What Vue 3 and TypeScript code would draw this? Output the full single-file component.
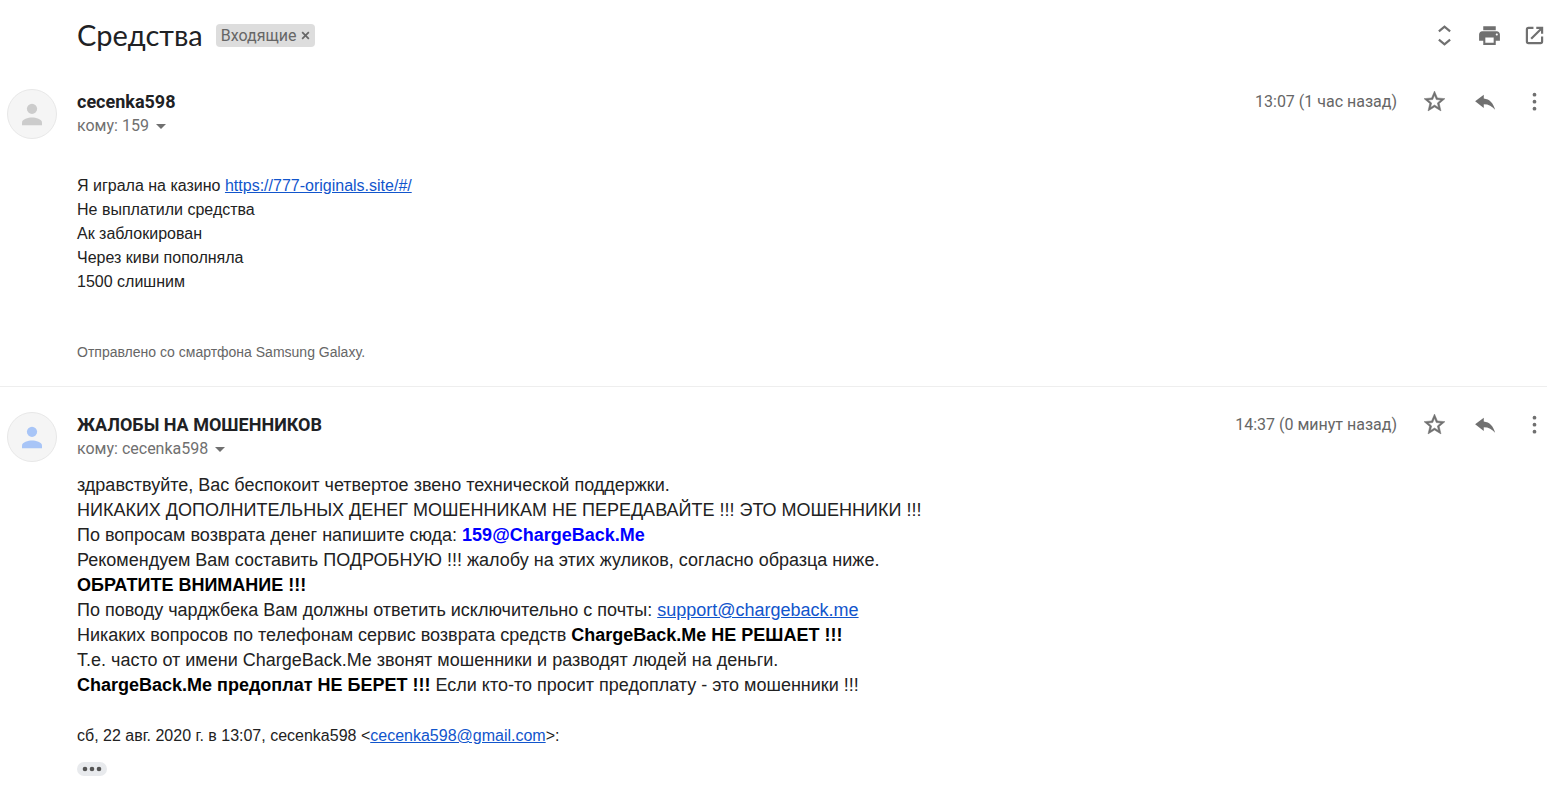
<script setup lang="ts">
interface Message {
  id: number
  sender: string
  recipient: string
  time: string
  own: boolean
}

const messages: Message[] = [
  { id: 1, sender: 'cecenka598', recipient: '159', time: '13:07 (1 час назад)', own: false },
  { id: 2, sender: 'ЖАЛОБЫ НА МОШЕННИКОВ', recipient: 'cecenka598', time: '14:37 (0 минут назад)', own: true },
]
</script>

<template>
  <main class="thread">
    <header class="subject">
      <h1>Средства</h1>
      <span class="label">
        Входящие
        <button type="button" class="remove" aria-label="Удалить ярлык">
          <svg viewBox="0 0 10 10"><path d="M1.3 1.3 8.7 8.7M8.7 1.3 1.3 8.7" fill="none" stroke="currentColor" stroke-width="1.9" /></svg>
        </button>
      </span>
      <div class="tools">
        <button type="button" class="icon" aria-label="Развернуть все">
          <svg viewBox="0 0 24 24"><path d="M6.600 8.100 12 3.600l5.400 4.500M6.600 15.900l5.400 4.500 5.400-4.500" fill="none" stroke="currentColor" stroke-width="2.100" /></svg>
        </button>
        <button type="button" class="icon" aria-label="Печать">
          <svg viewBox="0 0 24 24"><path d="M19 8H5c-1.66 0-3 1.34-3 3v6h4v4h12v-4h4v-6c0-1.66-1.34-3-3-3zm-3 11H8v-5h8v5zm3-7c-.55 0-1-.45-1-1s.45-1 1-1 1 .45 1 1-.45 1-1 1zm-1-9H6v4h12V3z" /></svg>
        </button>
        <button type="button" class="icon" aria-label="В новом окне">
          <svg viewBox="0 0 24 24"><path d="M11 4.700H6.200Q4.700 4.700 4.700 6.200V17.800Q4.700 19.300 6.200 19.300H17.800Q19.300 19.300 19.300 17.800V13M13.700 4.700h5.600v5.600M19 5 8.800 15.200" fill="none" stroke="currentColor" stroke-width="2.100" /></svg>
        </button>
      </div>
    </header>

    <article v-for="m in messages" :key="m.id" class="message">
      <div class="avatar" :class="{ own: m.own }">
        <svg viewBox="0 0 24 24"><circle cx="12" cy="7.800" r="4.100" /><path d="M4 20.900v-2.200c0-2.700 5-4 8-4s8 1.300 8 4v2.200z" /></svg>
      </div>
      <div class="content">
        <div class="meta">
          <div class="people">
            <h2>{{ m.sender }}</h2>
            <button type="button" class="recipient">
              кому: {{ m.recipient }}
              <svg viewBox="0 0 10 5"><path d="M0 0h10L5 5z" /></svg>
            </button>
          </div>
          <div class="actions">
            <time>{{ m.time }}</time>
            <button type="button" class="icon" aria-label="Пометить">
              <svg viewBox="0 0 24 24"><path stroke="currentColor" stroke-width=".5" d="M22 9.24l-7.19-.62L12 2 9.19 8.63 2 9.24l5.46 4.73L5.82 21 12 17.27 18.18 21l-1.63-7.03L22 9.24zM12 15.4l-3.76 2.27 1-4.28-3.32-2.88 4.38-.38L12 6.1l1.71 4.04 4.38.38-3.32 2.88 1 4.28L12 15.4z" /></svg>
            </button>
            <button type="button" class="icon" aria-label="Ответить">
              <svg viewBox="0 0 24 24"><path d="M11.300 9V5.500L3 11.700l8.300 6.500v-3.600c4.700 0 8 1.900 10.900 5.400C20.600 13.500 17 9.600 11.300 9z" /></svg>
            </button>
            <button type="button" class="icon" aria-label="Ещё">
              <svg viewBox="0 0 24 24"><circle cx="12" cy="5.500" r="1.800" /><circle cx="12" cy="12.200" r="1.800" /><circle cx="12" cy="18.900" r="1.800" /></svg>
            </button>
          </div>
        </div>

        <div v-if="!m.own" class="body complaint">
          <p>Я играла на казино <a href="https://777-originals.site/#/">https://777-originals.site/#/</a></p>
          <p>Не выплатили средства</p>
          <p>Ак заблокирован</p>
          <p>Через киви пополняла</p>
          <p>1500 слишним</p>
          <p class="signature">Отправлено со смартфона Samsung Galaxy.</p>
        </div>

        <template v-else>
          <div class="body reply">
            <p>здравствуйте, Вас беспокоит четвертое звено технической поддержки.</p>
            <p>НИКАКИХ ДОПОЛНИТЕЛЬНЫХ ДЕНЕГ МОШЕННИКАМ НЕ ПЕРЕДАВАЙТЕ !!! ЭТО МОШЕННИКИ !!!</p>
            <p>По вопросам возврата денег напишите сюда: <b class="address">159@ChargeBack.Me</b></p>
            <p>Рекомендуем Вам составить ПОДРОБНУЮ !!! жалобу на этих жуликов, согласно образца ниже.</p>
            <p><b>ОБРАТИТЕ ВНИМАНИЕ !!!</b></p>
            <p>По поводу чарджбека Вам должны ответить исключительно с почты: <a href="mailto:support@chargeback.me">support@chargeback.me</a></p>
            <p>Никаких вопросов по телефонам сервис возврата средств <b>ChargeBack.Me НЕ РЕШАЕТ !!!</b></p>
            <p>Т.е. часто от имени ChargeBack.Me звонят мошенники и разводят людей на деньги.</p>
            <p><b>ChargeBack.Me предоплат НЕ БЕРЕТ !!!</b> Если кто-то просит предоплату - это мошенники !!!</p>
          </div>
          <p class="body quote">сб, 22 авг. 2020 г. в 13:07, cecenka598 &lt;<a href="mailto:cecenka598@gmail.com">cecenka598@gmail.com</a>&gt;:</p>
          <button type="button" class="more" aria-label="Показать скрытое содержание">
            <svg viewBox="0 0 20 6"><circle cx="3" cy="3" r="2.300" /><circle cx="10" cy="3" r="2.300" /><circle cx="17" cy="3" r="2.300" /></svg>
          </button>
        </template>
      </div>
    </article>
  </main>
</template>

<style>
body {
  margin: 0;
  background: #fff;
}
</style>

<style scoped>
.thread {
  padding-right: 18px;
  font-family: Roboto, "Liberation Sans", sans-serif;
  color: #202124;
}
h1,
h2,
p {
  margin: 0;
}
button {
  padding: 0;
  border: 0;
  background: none;
  font: inherit;
  color: inherit;
  cursor: pointer;
}
svg {
  display: block;
  fill: currentColor;
}
a {
  color: #15c;
}
.subject {
  display: flex;
  align-items: center;
  height: 70px;
  padding-left: 77px;
}
h1 {
  font-family: Lato, sans-serif;
  font-size: 29px;
  font-weight: 400;
  line-height: 36px;
}
.label {
  display: flex;
  align-items: center;
  gap: 5px;
  margin-left: 13px;
  padding: 0 5px;
  border-radius: 4px;
  background: #ddd;
  color: #666;
  font-size: 16px;
  line-height: 23px;
}
.remove svg {
  width: 9px;
  height: 9px;
}
.tools {
  display: flex;
  gap: 20px;
  margin-left: auto;
}
.icon {
  color: #707070;
}
.icon svg {
  width: 25px;
  height: 25px;
}
.message {
  display: flex;
  align-items: flex-start;
  gap: 20px;
  padding: 19px 0 22px 7px;
}
.message + .message {
  padding-top: 25px;
  border-top: 1px solid #eee;
}
.avatar {
  box-sizing: border-box;
  display: grid;
  place-items: center;
  flex: none;
  width: 50px;
  height: 50px;
  border: 1px solid #e8e8e8;
  border-radius: 50%;
  background: #f5f5f5;
  color: #ccc;
}
.avatar.own {
  color: #a8c5f7;
}
.avatar svg {
  width: 30px;
  height: 30px;
}
.content {
  flex: 1;
  min-width: 0;
}
.meta {
  display: flex;
  align-items: flex-start;
  justify-content: space-between;
}
h2 {
  font-size: 18px;
  font-weight: 700;
  line-height: 25px;
}
.recipient {
  display: flex;
  align-items: center;
  gap: 7px;
  color: #707070;
  font-size: 16px;
  line-height: 24px;
}
.recipient svg {
  width: 10px;
  height: 5px;
}
.actions {
  display: flex;
  align-items: center;
  gap: 25px;
}
time {
  color: #666;
  font-size: 16px;
  line-height: 25px;
}
.body {
  font-family: "Liberation Sans", Arial, sans-serif;
  font-size: 16px;
  line-height: 24px;
  color: #222;
}
.complaint {
  padding-top: 36px;
}
.signature {
  margin-top: 46px;
  font-size: 14px;
  color: #666;
}
.reply {
  padding-top: 12px;
  font-size: 18px;
  line-height: 25px;
}
.reply b {
  color: #000;
}
.reply .address {
  color: #00f;
}
.quote {
  margin-top: 26px;
}
.more {
  display: grid;
  place-items: center;
  width: 30px;
  height: 14px;
  margin-top: 14px;
  border-radius: 7px;
  background: #e8eaed;
  color: #555;
}
.more svg {
  width: 20px;
  height: 6px;
}
</style>
